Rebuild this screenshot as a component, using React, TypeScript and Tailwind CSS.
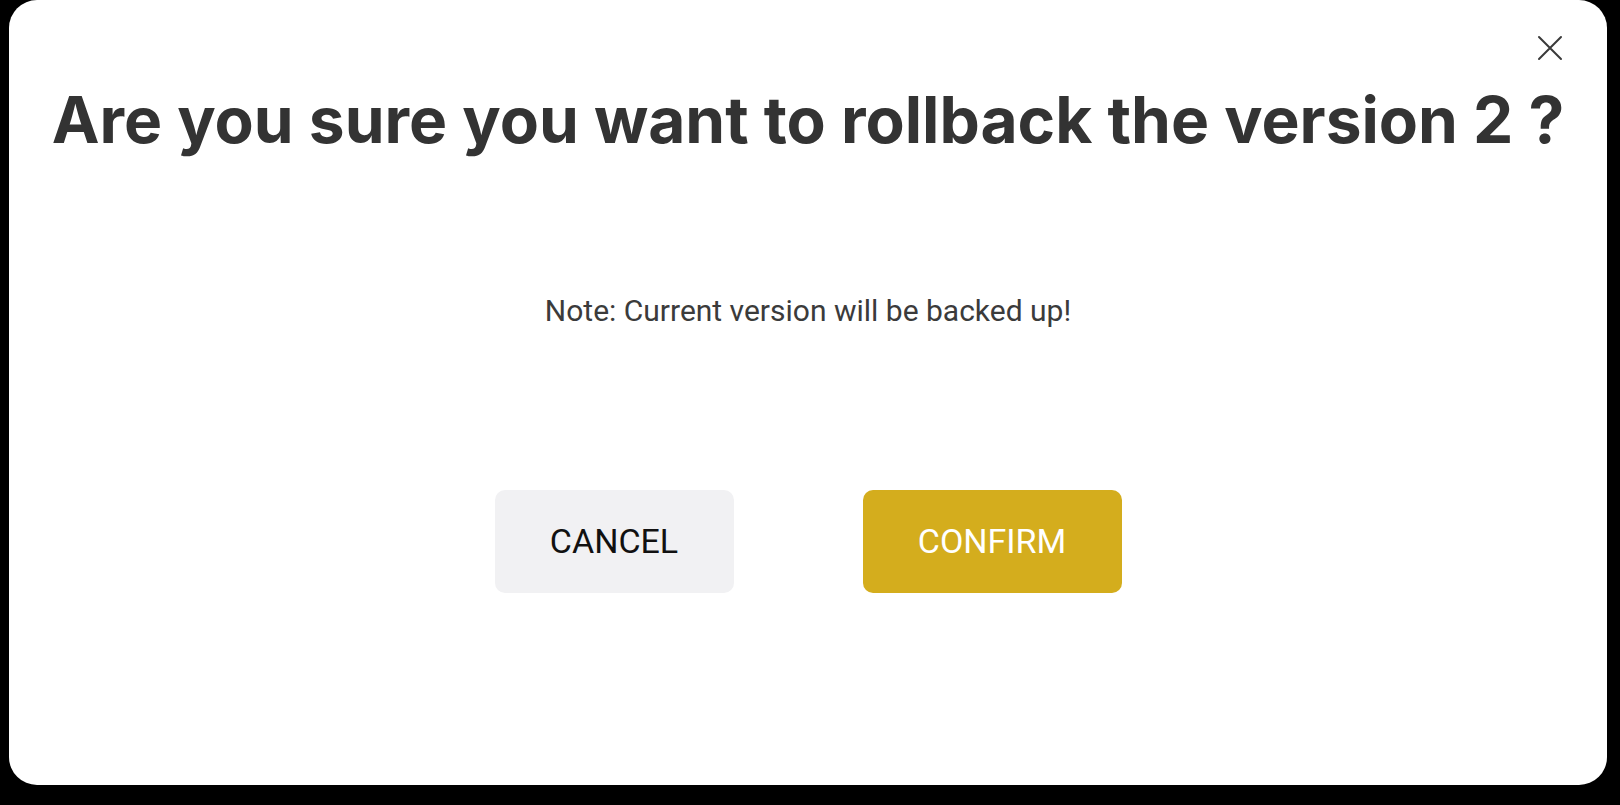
export default function App() {
  return (
    <div className="h-[805px] w-full overflow-hidden bg-black pl-[9px]">
      {/* Dialog */}
      <div className="relative flex h-[785px] w-[1598px] flex-col items-center rounded-[28px] bg-white">
        <button className="absolute right-[44px] top-[35px] text-[#3a3a3a]">
          <svg viewBox="0 0 26 26" className="h-[26px] w-[26px]" fill="none" stroke="currentColor" strokeWidth={2} strokeLinecap="round">
            <path d="M2 2 24 24M24 2 2 24" />
          </svg>
        </button>

        <h2 className="mt-[80px] text-center font-['Inter',sans-serif] text-[64px] font-bold leading-[80px] text-[#333333]">
          Are you sure you want to rollback the version 2 ?
        </h2>

        <p className="mt-[131px] font-['Roboto',sans-serif] text-[30px] leading-[40px] text-[#3b3b3b]">
          Note: Current version will be backed up!
        </p>

        <div className="mt-[159px] flex gap-[129px]">
          <button className="h-[103px] w-[239px] rounded-[10px] bg-[#f1f1f3] font-['Roboto',sans-serif] text-[34px] text-[#111111]">
            CANCEL
          </button>
          <button className="h-[103px] w-[259px] rounded-[10px] bg-[#d4ad1d] font-['Roboto',sans-serif] text-[34px] text-white">
            CONFIRM
          </button>
        </div>
      </div>
    </div>
  );
}
